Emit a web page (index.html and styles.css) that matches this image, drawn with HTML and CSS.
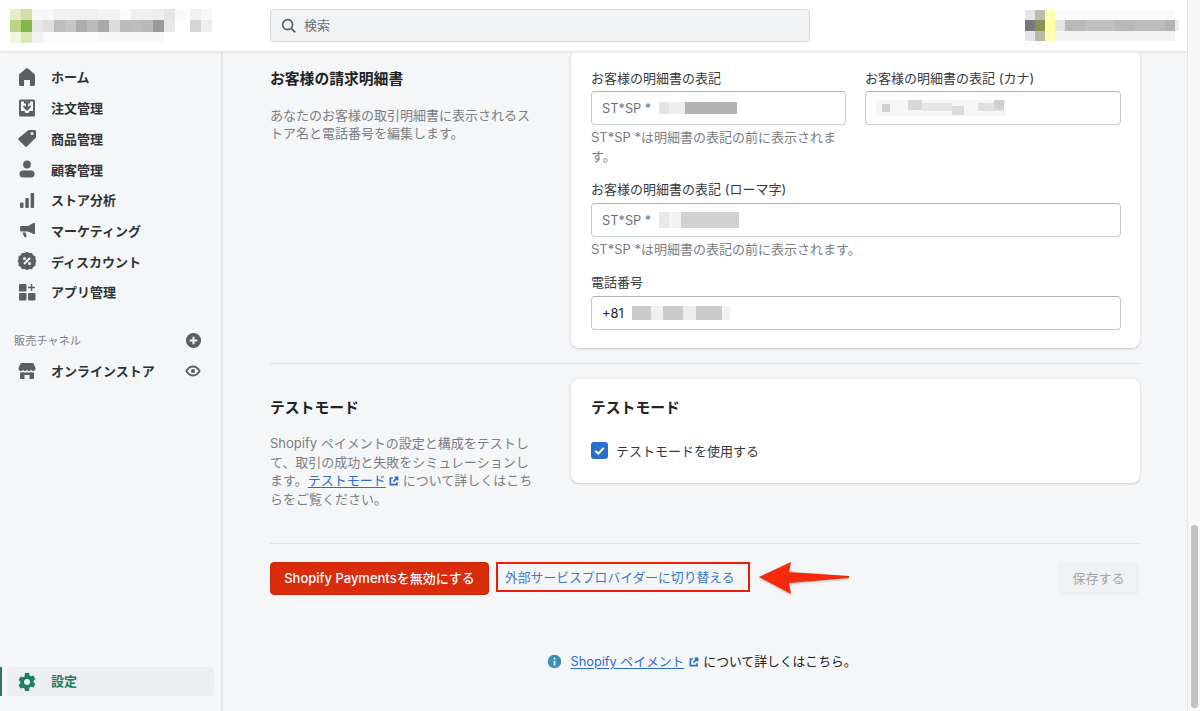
FILE: index.html
```html
<!DOCTYPE html>
<html lang="ja">
<head>
<meta charset="utf-8">
<title>Shopify Payments</title>
<link rel="stylesheet" href="styles.css">
</head>
<body>
<div class="page">
  <div class="app">
    <header class="top">
      <div class="brand">
        <svg class="mosaic" width="204" height="34" viewBox="0 0 204 34" shape-rendering="crispEdges">
          <g>
            <rect x="0" y="0" width="11" height="11" fill="#e4edc4"/><rect x="11" y="0" width="11" height="11" fill="#d3dfa8"/><rect x="22" y="0" width="22" height="11" fill="#f8f8f8"/><rect x="44" y="0" width="44" height="11" fill="#f1f1f1"/><rect x="88" y="0" width="22" height="11" fill="#f4f4f4"/><rect x="110" y="0" width="11" height="11" fill="#fbfbfb"/><rect x="121" y="0" width="22" height="11" fill="#f0f0f0"/><rect x="143" y="0" width="11" height="11" fill="#eeeeee"/><rect x="154" y="0" width="11" height="11" fill="#e6e6e6"/><rect x="165" y="0" width="11" height="11" fill="#fafafa"/><rect x="180" y="0" width="11" height="11" fill="#f1f1f1"/><rect x="191" y="0" width="11" height="11" fill="#f8f8f8"/>
            <rect x="0" y="11" width="11" height="12" fill="#bcd585"/><rect x="11" y="11" width="11" height="12" fill="#84b54a"/><rect x="22" y="11" width="11" height="12" fill="#e8e8e8"/><rect x="33" y="11" width="11" height="12" fill="#dfdfdf"/><rect x="44" y="11" width="11" height="12" fill="#bdbdbd"/><rect x="55" y="11" width="11" height="12" fill="#c6c6c6"/><rect x="66" y="11" width="11" height="12" fill="#adadad"/><rect x="77" y="11" width="11" height="12" fill="#bababa"/><rect x="88" y="11" width="11" height="12" fill="#a9a9ac"/><rect x="99" y="11" width="11" height="12" fill="#dddddd"/><rect x="110" y="11" width="11" height="12" fill="#bbbbbb"/><rect x="121" y="11" width="11" height="12" fill="#bdbdbd"/><rect x="132" y="11" width="11" height="12" fill="#b9b9b9"/><rect x="143" y="11" width="11" height="12" fill="#9a9a9c"/><rect x="154" y="11" width="11" height="12" fill="#e8e8e8"/><rect x="180" y="11" width="11" height="12" fill="#d6d6d6"/><rect x="191" y="11" width="11" height="12" fill="#eeeeee"/>
            <rect x="0" y="23" width="11" height="11" fill="#f2f6e0"/><rect x="11" y="23" width="11" height="11" fill="#dbe7b6"/><rect x="22" y="23" width="11" height="11" fill="#f3f3f3"/><rect x="33" y="23" width="55" height="11" fill="#fcfcfc"/><rect x="88" y="23" width="66" height="11" fill="#f9f9f9"/>
          </g>
        </svg>
      </div>
      <div class="search">
        <svg class="icon18" viewBox="0 0 20 20"><path class="ln2" d="M8.500 3a5.500 5.500 0 1 1 0 11 5.500 5.500 0 0 1 0-11zM12.600 12.600 17 17"/></svg>
        <span>検索</span>
      </div>
      <div class="account">
        <svg class="mosaic" width="154" height="31" viewBox="0 0 154 31" shape-rendering="crispEdges">
          <rect x="0" y="0" width="10" height="10" fill="#e5e5e8"/><rect x="10" y="0" width="10" height="10" fill="#bcbcaa"/><rect x="20" y="0" width="10" height="10" fill="#ffffb0"/><rect x="30" y="0" width="120" height="10" fill="#fafafa"/>
          <rect x="0" y="10" width="10" height="11" fill="#77777c"/><rect x="10" y="10" width="10" height="11" fill="#8c9158"/><rect x="20" y="10" width="10" height="11" fill="#ffffa4"/><rect x="30" y="10" width="10" height="11" fill="#e5e5e6"/><rect x="40" y="10" width="20" height="11" fill="#b8bab9"/><rect x="60" y="10" width="30" height="11" fill="#c0c0c0"/><rect x="90" y="10" width="20" height="11" fill="#b7b9b8"/><rect x="110" y="10" width="30" height="11" fill="#bcbcbc"/><rect x="140" y="10" width="10" height="11" fill="#b2b4b4"/><rect x="150" y="10" width="4" height="11" fill="#ededed"/>
          <rect x="0" y="21" width="10" height="10" fill="#e4e5e8"/><rect x="10" y="21" width="10" height="10" fill="#b9b9a6"/><rect x="20" y="21" width="10" height="10" fill="#ffffb4"/><rect x="30" y="21" width="120" height="10" fill="#f3f3f3"/>
        </svg>
      </div>
    </header>
    <div class="shell">
      <nav class="side">
        <ul class="menu">
          <li class="item"><svg class="icon" viewBox="0 0 20 20"><path d="M2 8.200c0-.5.2-.9.6-1.200L9 1.600c.6-.5 1.400-.5 2 0L17.400 7c.4.3.6.7.6 1.200v9.300c0 .8-.7 1.500-1.500 1.500H13v-6H7v6H3.500c-.8 0-1.500-.7-1.500-1.500z"/></svg><span>ホーム</span></li>
          <li class="item"><svg class="icon" viewBox="0 0 20 20"><path fill-rule="evenodd" d="M3.500 1.500h13A1.500 1.500 0 0 1 18 3v14a1.500 1.500 0 0 1-1.500 1.500h-13A1.500 1.500 0 0 1 2 17V3a1.500 1.500 0 0 1 1.500-1.500zM4 3.500V13h3.500l1 2h3l1-2H16V3.500h-3V5.500h-2V3.500H9V5.500H7V3.500z"/><path d="M9 3.500h2v5.600l1.800-1.800 1.400 1.400L10 12.900 5.800 8.700l1.400-1.400L9 9.100z"/></svg><span>注文管理</span></li>
          <li class="item"><svg class="icon" viewBox="0 0 20 20"><path fill-rule="evenodd" d="M12 2h5.500c.8 0 1.500.7 1.500 1.500V9a1 1 0 0 1-.3.700l-8.600 8.600a1.500 1.500 0 0 1-2.100 0L1.700 12a1.500 1.500 0 0 1 0-2.100l9.600-7.600c.2-.2.400-.3.700-.3zM15 4a1.500 1.500 0 1 0 0 3 1.500 1.500 0 0 0 0-3z"/></svg><span>商品管理</span></li>
          <li class="item"><svg class="icon" viewBox="0 0 20 20"><circle cx="10" cy="5.500" r="3.900"/><rect x="2.500" y="11.500" width="15" height="7" rx="3.500"/></svg><span>顧客管理</span></li>
          <li class="item"><svg class="icon" viewBox="0 0 20 20"><rect x="3" y="12.500" width="3.500" height="5.500" rx="1"/><rect x="8.300" y="8" width="3.500" height="10" rx="1"/><rect x="13.600" y="3" width="3.500" height="15" rx="1"/></svg><span>ストア分析</span></li>
          <li class="item"><svg class="icon" viewBox="0 0 20 20"><path d="M18 3v11h-1.500L11 11.500H4.500a1.500 1.500 0 0 1-1.500-1.500V7.500A1.500 1.500 0 0 1 4.500 6H11l5.500-3z"/><path d="M5.500 12.500h3.200l.8 3.500a1 1 0 0 1-1 1.200H8a1 1 0 0 1-1-.8z"/></svg><span>マーケティング</span></li>
          <li class="item"><svg class="icon" viewBox="0 0 20 20"><path fill-rule="evenodd" d="M10 .8l2.300 1.300 2.700-.2 1.300 2.400 2.300 1.300-.2 2.700L19.400 10l-1 1.900.2 2.700-2.300 1.300-1.300 2.400-2.700-.2L10 19.200l-2.300-1.100-2.700.2-1.300-2.400-2.300-1.300.2-2.700L.6 10l1-1.700-.2-2.700 2.300-1.300L5 1.900l2.700.2zM12.300 6.300l-6 6 1.400 1.400 6-6zM7.500 6a1.500 1.500 0 1 0 0 3 1.500 1.500 0 0 0 0-3zm5 5a1.500 1.500 0 1 0 0 3 1.500 1.500 0 0 0 0-3z"/></svg><span>ディスカウント</span></li>
          <li class="item"><svg class="icon" viewBox="0 0 20 20"><rect x="2" y="2" width="7.500" height="7.500" rx="1"/><rect x="2" y="11" width="7.500" height="7.500" rx="1"/><rect x="11" y="11" width="7.500" height="7.500" rx="1"/><path d="M13.800 2h1.500v2.800H18v1.500h-2.700V9h-1.500V6.300H11V4.800h2.800z"/></svg><span>アプリ管理</span></li>
        </ul>
        <div class="chan">
          <span>販売チャネル</span>
          <svg class="icon" viewBox="0 0 20 20"><path fill-rule="evenodd" d="M10 2a8 8 0 1 1 0 16 8 8 0 0 1 0-16zM9 6v3H6v2h3v3h2v-3h3V9h-3V6z"/></svg>
        </div>
        <div class="item store"><svg class="icon" viewBox="0 0 20 20"><path d="M4.500 2h11c.5 0 .9.300 1.100.7L18.500 7c.3 1.600-.7 3-2.200 3-1 0-1.800-.5-2.200-1.300-.5.800-1.300 1.300-2.100 1.300s-1.500-.5-2-1.300c-.5.800-1.200 1.300-2 1.300S6.400 9.500 5.900 8.700C5.500 9.500 4.700 10 3.700 10c-1.500 0-2.500-1.400-2.200-3l1.900-4.300c.2-.4.600-.7 1.100-.7z"/><path d="M3 11.500c1.200.3 2.300 0 3-.5.800.7 2.800.9 4 0 1.200.9 3.200.7 4 0 .7.500 1.800.8 3 .5V17a1 1 0 0 1-1 1h-3.500v-4h-5v4H4a1 1 0 0 1-1-1z"/></svg><span>オンラインストア</span>
          <svg class="icon eye" viewBox="0 0 20 20"><path fill-rule="evenodd" d="M10 4c4.500 0 7.500 3.800 8.500 6-1 2.200-4 6-8.500 6s-7.500-3.800-8.500-6c1-2.200 4-6 8.500-6zm0 2.200C7.300 6.200 5 8 3.800 10c1.200 2 3.500 3.800 6.200 3.800s5-1.800 6.200-3.800C15 8 12.700 6.200 10 6.200zM10 7.700a2.300 2.300 0 1 1 0 4.600 2.300 2.300 0 0 1 0-4.600z"/></svg></div>
        <div class="grow"></div>
        <div class="settings">
          <div class="active"><svg class="icon" viewBox="0 0 20 20"><path fill-rule="evenodd" d="M8 1h4l.5 2.400 1.600.9 2.300-.8 2 3.500-1.800 1.600v1.800l1.800 1.600-2 3.500-2.300-.8-1.600.9L12 19H8l-.5-2.400-1.600-.9-2.300.8-2-3.500 1.800-1.600V9.600L1.600 8l2-3.500 2.300.8 1.600-.9zM10 7a3 3 0 1 0 0 6 3 3 0 0 0 0-6z"/></svg><span>設定</span></div>
        </div>
      </nav>
      <main class="main">
        <section class="row first">
          <div class="intro">
            <h2>お客様の請求明細書</h2>
            <p>あなたのお客様の取引明細書に表示されるストア名と電話番号を編集します。</p>
          </div>
          <div class="card form">
            <div class="pair">
              <div class="field">
                <label>お客様の明細書の表記</label>
                <div class="input"><span>ST*SP *</span>
                  <svg class="blur" width="78" height="12" viewBox="0 0 78 12" shape-rendering="crispEdges"><rect width="10" height="12" fill="#e4e4e4"/><rect x="10" width="16" height="12" fill="#efefef"/><rect x="26" width="52" height="12" fill="#b3b3b3"/></svg></div>
                <small>ST*SP *は明細書の表記の前に表示されます。</small>
              </div>
              <div class="field">
                <label>お客様の明細書の表記 (カナ)</label>
                <div class="input">
                  <svg class="blur" width="130" height="16" viewBox="0 0 130 16" shape-rendering="crispEdges"><rect width="130" height="16" fill="#f6f6f6"/><rect x="6" y="4" width="8" height="8" fill="#d2d2d2"/><rect x="32" y="0" width="14" height="10" fill="#d8d8d8"/><rect x="46" y="3" width="30" height="8" fill="#e6e6e6"/><rect x="76" y="6" width="12" height="9" fill="#dadada"/><rect x="102" y="3" width="26" height="8" fill="#e0e0e0"/><rect x="118" y="0" width="10" height="9" fill="#cfcfcf"/></svg></div>
              </div>
            </div>
            <div class="field">
              <label>お客様の明細書の表記 (ローマ字)</label>
              <div class="input"><span>ST*SP *</span>
                <svg class="blur" width="80" height="16" viewBox="0 0 80 16" shape-rendering="crispEdges"><rect width="10" height="16" fill="#e8e8e8"/><rect x="10" width="12" height="16" fill="#f3f3f3"/><rect x="22" width="58" height="16" fill="#d0d0d0"/></svg></div>
              <small>ST*SP *は明細書の表記の前に表示されます。</small>
            </div>
            <div class="field">
              <label>電話番号</label>
              <div class="input dark"><span>+81</span>
                <svg class="blur" width="98" height="14" viewBox="0 0 98 14" shape-rendering="crispEdges"><rect width="19" height="14" fill="#cbcbcb"/><rect x="19" width="12" height="14" fill="#f0f0f0"/><rect x="31" width="20" height="14" fill="#cbcbcb"/><rect x="51" width="13" height="14" fill="#ededed"/><rect x="64" width="26" height="14" fill="#cbcbcb"/><rect x="90" width="8" height="14" fill="#f2f2f2"/></svg></div>
            </div>
          </div>
        </section>
        <hr class="rule">
        <section class="row">
          <div class="intro test">
            <h2>テストモード</h2>
            <p>Shopify ペイメントの設定と構成をテストして、取引の成功と失敗をシミュレーションします。<a class="link" href="#">テストモード</a><svg class="ext" viewBox="0 0 20 20"><path d="M11 4h5v5M16 4l-7 7M8 5H4v11h11v-4"/></svg>について詳しくはこちらをご覧ください。</p>
          </div>
          <div class="card mode">
            <h2>テストモード</h2>
            <div class="check">
              <span class="box"><svg viewBox="0 0 16 16"><path d="M4 8.300 6.900 11 12 5.500"/></svg></span>
              <span>テストモードを使用する</span>
            </div>
          </div>
        </section>
        <hr class="rule second">
        <div class="actions">
          <button class="danger" type="button">Shopify Paymentsを無効にする</button>
          <a class="switch" href="#">外部サービスプロバイダーに切り替える</a>
          <svg class="arrow" width="92" height="34" viewBox="0 0 92 34"><path d="M0 16 32 1l-2 10 60 4v2l-60 5 2 11z"/></svg>
          <button class="save" type="button">保存する</button>
        </div>
        <div class="foot">
          <svg class="info" viewBox="0 0 20 20"><path fill-rule="evenodd" d="M10 2a8 8 0 1 1 0 16 8 8 0 0 1 0-16zM9 5.500v2h2v-2zM9 9v5.500h2V9z"/></svg>
          <a class="link" href="#">Shopify ペイメント</a>
          <svg class="ext" viewBox="0 0 20 20"><path d="M11 4h5v5M16 4l-7 7M8 5H4v11h11v-4"/></svg>
          <span>について詳しくはこちら。</span>
        </div>
      </main>
    </div>
  </div>
  <div class="scroll"><div class="thumb"></div></div>
</div>
</body>
</html>
```
FILE: styles.css
```css
* { box-sizing: border-box; }
html, body { margin: 0; height: 100%; }
body {
  font-family: "Inter", "Noto Sans CJK JP", sans-serif;
  font-size: 13px;
  color: #202223;
  background: #f5f6f8;
  overflow: hidden;
}
.page { display: flex; height: 711px; }
.app { flex: 1; min-width: 0; display: flex; flex-direction: column; }
.top {
  height: 52px;
  flex: none;
  background: #fff;
  display: flex;
  align-items: center;
  border-bottom: 1px solid #e4e5e7;
  box-shadow: 0 1px 2px rgba(0,0,0,.05);
  position: relative;
  z-index: 2;
}
.brand { width: 270px; padding-left: 10px; display: flex; align-items: center; }
.mosaic { display: block; }
.search {
  width: 540px;
  height: 33px;
  background: #f2f3f4;
  border: 1px solid #d5d8db;
  border-radius: 4px;
  display: flex;
  align-items: center;
  gap: 6px;
  padding-left: 9px;
  color: #6d7175;
}
.search span { margin-top: -2px; }
.icon18 { width: 18px; height: 18px; flex: none; }
.ln2 { fill: none; stroke: #5c5f62; stroke-width: 1.9; }
.account { margin-left: auto; margin-right: 8px; }
.shell { flex: 1; display: flex; min-height: 0; }
.side {
  width: 223px;
  flex: none;
  border-right: 2px solid #e7e8ea;
  display: flex;
  flex-direction: column;
  padding-top: 9.6px;
}
.menu { list-style: none; margin: 0; padding: 0; }
.item {
  height: 30.7px;
  display: flex;
  align-items: center;
  padding-left: 17px;
  gap: 14px;
  font-weight: 600;
  font-size: 13px;
  color: #303336;
}
.icon { width: 20px; height: 20px; flex: none; fill: #5c5f62; }
.chan {
  display: flex;
  align-items: center;
  justify-content: space-between;
  margin-top: 18.4px;
  height: 30px;
  padding: 0 18px 0 14px;
  font-size: 11.2px;
  color: #7c7f83;
}
.chan .icon { width: 19px; height: 19px; }
.store { position: relative; }
.eye { width: 18px; height: 18px; margin-left: auto; margin-right: 19px; }
.grow { flex: 1; }
.settings { padding: 0 7px 15px 0; }
.active {
  height: 29px;
  margin-left: 7px;
  background: #edeef0;
  border-radius: 4px;
  display: flex;
  align-items: center;
  gap: 14px;
  padding-left: 10px;
  font-weight: 600;
  font-size: 13px;
  color: #1f7d64;
  position: relative;
}
.active span { margin-top: -2px; }
.active::before {
  content: "";
  position: absolute;
  left: -7px;
  top: 0;
  width: 2px;
  height: 29px;
  background: #2a7a63;
}
.active .icon { fill: #1f7d64; }
.main { flex: 1; min-width: 0; padding: 0 47px 0 47px; }
.row { display: grid; grid-template-columns: 266px 1fr; column-gap: 35px; }
.first { margin-top: -2px; }
.intro h2, .mode h2 { margin: 0; font-size: 14.8px; line-height: 20px; font-weight: 600; }
.first .intro { padding-top: 19px; }
.first .intro p { margin-top: 17px; line-height: 18.4px; }
.intro p { margin: 16px 0 0; line-height: 18.7px; color: #7b7e82; font-size: 13px; }
.test { padding-top: 19px; }
.card {
  background: #fff;
  border-radius: 8px;
  box-shadow: 0 0 4px rgba(23,24,24,.07), 0 1px 2px rgba(66,71,76,.2);
}
.form { padding: 18px 19px 18px 20px; }
.pair { display: grid; grid-template-columns: 255px 1fr; column-gap: 19px; }
.field { margin-bottom: 14px; }
.form > .field:last-child { margin-bottom: 0; }
.pair .field { margin-bottom: 14px; }
label { display: block; line-height: 20px; font-size: 13px; color: #36393c; margin-bottom: 3px; }
.form > .field label { margin: -1px 0 4px; }
.input {
  height: 34px;
  border: 1px solid #c4cdd5;
  border-top-color: #aeb4b9;
  border-radius: 4px;
  background: #fff;
  display: flex;
  align-items: center;
  padding: 0 10px;
  gap: 8px;
  color: #6d7175;
  font-size: 12.8px;
}
.dark { color: #202223; }
.blur { display: block; flex: none; }
small { display: block; font-size: 13px; line-height: 19px; margin-top: 3px; color: #7b7e82; }
.rule { margin: 15px 0 15px; border: 0; border-top: 1px solid #e1e3e5; }
.second { margin: 34px 0 18px; }
.mode { height: 104px; padding: 19px 20px; }
.check { display: flex; align-items: center; gap: 8px; margin-top: 23px; font-size: 13px; color: #36393c; }
.box { width: 17px; height: 17px; background: #2c6ecb; border-radius: 3px; display: block; flex: none; }
.box svg { display: block; fill: none; stroke: #fff; stroke-width: 1.9; }
.link { color: #2c6ecb; text-decoration: underline; text-underline-offset: 2px; }
.ext { width: 12px; height: 12px; fill: none; stroke: #2c6ecb; stroke-width: 2.8; vertical-align: -2px; margin: 0 3px 0 2px; }
.actions { display: flex; align-items: flex-start; }
button { font-family: inherit; border-radius: 4px; }
.danger {
  width: 219px;
  height: 33px;
  border: 1px solid #c9280c;
  background: #d82c0d;
  color: #fff;
  font-size: 13px;
  font-weight: 500;
  padding: 0 0 2px;
}
.switch {
  margin-left: 7px;
  width: 254px;
  height: 30px;
  border: 2px solid #ef1c0c;
  color: #3a78d0;
  font-size: 12.8px;
  line-height: 27px;
  padding-left: 7px;
  text-decoration: none;
  white-space: nowrap;
}
.arrow { display: block; margin: -1px 0 0 9px; fill: #f52a0a; filter: drop-shadow(0 1px 1px rgba(0,0,0,.25)); }
.save {
  margin: 0 1px 0 auto;
  width: 81px;
  height: 33px;
  border: 0;
  background: #f0f1f2;
  color: #a2a5a8;
  font-size: 13px;
  padding: 0 0 2px;
}
.foot {
  margin-top: 57px;
  padding-right: 7px;
  display: flex;
  align-items: center;
  justify-content: center;
  line-height: 20px;
  font-size: 12.8px;
}
.info { width: 17px; height: 17px; fill: #3e8fb5; margin-right: 7px; }
.foot .ext { margin: 0 3px 0 4px; }
.scroll { width: 13px; flex: none; background: #f8f8f9; border-left: 1px solid #e6e7e8; padding: 525px 2px 3px 3px; }
.thumb { height: 100%; background: #c2c3c5; border-radius: 4px; }
```
